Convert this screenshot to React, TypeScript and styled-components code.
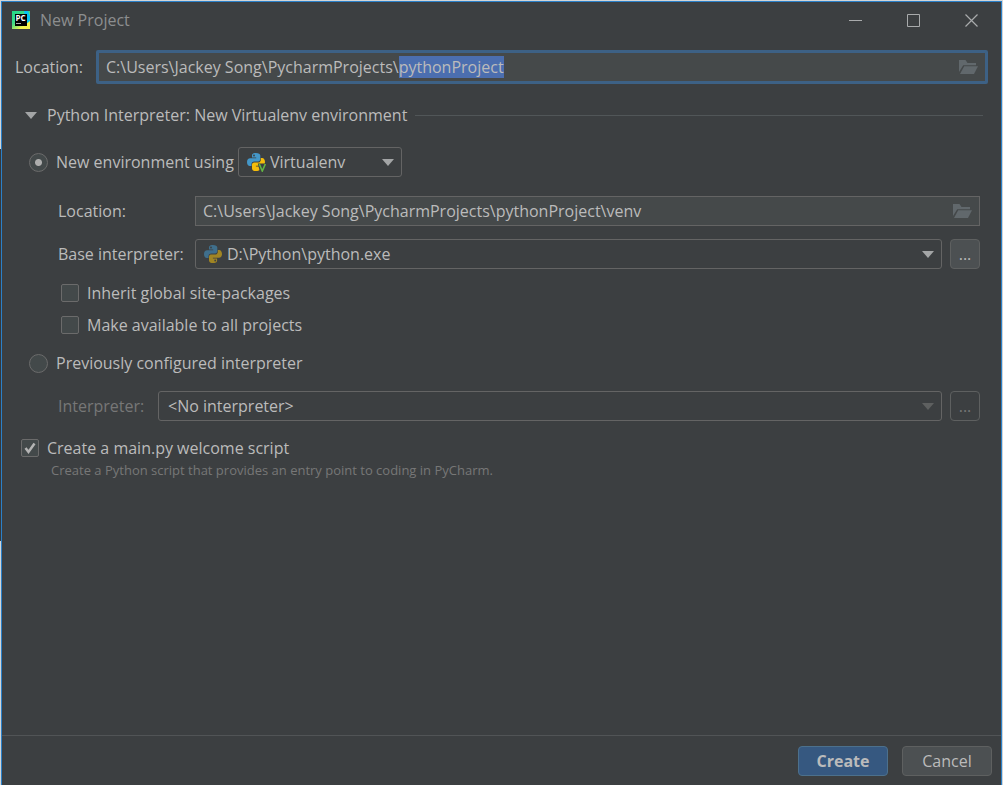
import React, { useEffect, useRef, useState } from "react";
import styled, { createGlobalStyle } from "styled-components";

const GlobalStyle = createGlobalStyle`
  *, *::before, *::after { box-sizing: border-box; }
  html, body, #root { height: 100%; }
  body {
    margin: 0;
    background: #d9dadb;
    color: #bbbbbb;
    font-family: "Open Sans", "Noto Sans", sans-serif;
    font-size: 16px;
    line-height: 22px;
  }
  input, select, button { font: inherit; color: inherit; margin: 0; }
`;

const Desktop = styled.div`
  min-height: 100%;
  display: flex;
  padding: 1px 1px 0;
  background: linear-gradient(#35383b, #35383b) 0 149px / 1px 392px no-repeat #d2d5d7;
`;

const Dialog = styled.section`
  flex: 1;
  min-width: 0;
  display: flex;
  flex-direction: column;
  background: #3c3f41;
  border: 1px solid #2b80c8;
  border-bottom: 0;
`;

const TitleBar = styled.header`
  display: flex;
  align-items: center;
  height: 36px;
  padding-left: 10px;
`;

const Title = styled.h1`
  flex: 1;
  margin: 0 0 0 10px;
  font-size: 16px;
  font-weight: 400;
  color: #8c8e8f;
`;

const WindowButton = styled.button`
  display: grid;
  place-items: center;
  width: 58px;
  height: 36px;
  padding: 0 2px 0 0;
  border: 0;
  background: none;
  color: #a9abac;
`;

const Body = styled.main`
  flex: 1;
  display: flex;
  flex-direction: column;
  padding: 12px 13px 0;
`;

const Row = styled.div<{ $indent?: number; $top?: number; $gap?: number }>`
  display: flex;
  align-items: center;
  gap: ${(p) => p.$gap ?? 8}px;
  margin-top: ${(p) => p.$top ?? 0}px;
  padding-left: ${(p) => p.$indent ?? 0}px;
`;

const Section = styled.div`
  padding: 0 8px 0 7px;
`;

const FieldLabel = styled.label<{ $width?: number; $dim?: boolean }>`
  flex: none;
  width: ${(p) => (p.$width ? `${p.$width}px` : "auto")};
  white-space: nowrap;
  color: ${(p) => (p.$dim ? "#777777" : "inherit")};
`;

const Field = styled.div<{ $focus?: boolean }>`
  flex: 1;
  display: flex;
  align-items: center;
  height: ${(p) => (p.$focus ? 34 : 30)}px;
  padding-right: 7px;
  background: #45494a;
  border: ${(p) => (p.$focus ? "3px solid #3d6185" : "1px solid #646464")};
  border-radius: ${(p) => (p.$focus ? 2 : 0)}px;
`;

const TextInput = styled.input`
  flex: 1;
  min-width: 0;
  padding: 0 7px;
  border: 0;
  outline: 0;
  background: none;
  caret-color: transparent;
  &::selection { background: #4b6eaf; color: #bbbbbb; }
`;

const IconButton = styled.button`
  display: flex;
  padding: 0;
  border: 0;
  background: none;
  color: #61686c;
`;

const SectionToggle = styled.button`
  display: flex;
  align-items: center;
  gap: 10px;
  padding: 0;
  border: 0;
  background: none;
`;

const Rule = styled.hr`
  flex: 1;
  height: 1px;
  margin: 0 5px 0 0;
  border: 0;
  background: #515658;
`;

const SelectGroup = styled.div`
  flex: 1;
  display: flex;
  gap: 8px;
`;

const SelectBox = styled.div<{ $width?: number }>`
  position: relative;
  flex: ${(p) => (p.$width ? "none" : "1")};
  width: ${(p) => (p.$width ? `${p.$width}px` : "auto")};
  height: 30px;
`;

const Select = styled.select<{ $icon?: boolean }>`
  appearance: none;
  width: 100%;
  height: 100%;
  padding: 0 32px 0 ${(p) => (p.$icon ? 31 : 9)}px;
  background: #3c3f41;
  border: 1px solid #646464;
  border-radius: 3px;
  &:disabled { opacity: 1; color: #bbbbbb; }
`;

const SelectIcon = styled.span`
  position: absolute;
  left: 9px;
  top: 6px;
  display: flex;
  pointer-events: none;
`;

const SelectArrow = styled.span`
  position: absolute;
  right: 8px;
  top: 12px;
  display: flex;
  pointer-events: none;
`;

const MoreButton = styled.button`
  width: 30px;
  height: 30px;
  padding: 0;
  background: #4c5052;
  border: 1px solid #5e6060;
  border-radius: 4px;
  &:disabled { background: none; color: #777777; }
`;

const Radio = styled.input`
  appearance: none;
  flex: none;
  width: 19px;
  height: 19px;
  border: 1px solid #6b6b6b;
  border-radius: 50%;
  background: #43494a;
  &:checked { background: radial-gradient(circle, #adadad 3px, #43494a 4px); }
`;

const CheckMark = styled.svg`
  position: absolute;
  inset: 0;
  pointer-events: none;
`;

const CheckHolder = styled.span`
  position: relative;
  flex: none;
  display: flex;
`;

const CheckInput = styled.input`
  appearance: none;
  width: 18px;
  height: 18px;
  border: 1px solid #6b6b6b;
  border-radius: 2px;
  background: #43494a;
`;

const Hint = styled.p`
  margin: 1px 0 0 36px;
  font-size: 13px;
  line-height: 20px;
  color: #777777;
`;

const Footer = styled.footer`
  display: flex;
  justify-content: flex-end;
  gap: 14px;
  padding: 10px 9px 9px;
  border-top: 1px solid #515456;
`;

const ActionButton = styled.button<{ $primary?: boolean }>`
  width: 90px;
  height: 30px;
  padding: 0;
  border: 1px solid ${(p) => (p.$primary ? "#4c708c" : "#5e6060")};
  border-radius: 4px;
  background: ${(p) => (p.$primary ? "#365880" : "#4c5052")};
  font-weight: ${(p) => (p.$primary ? 700 : 400)};
`;

const Arrow = ({ color = "#a3a5a6" }: { color?: string }) => (
  <svg width="12" height="7" viewBox="0 0 12 7" aria-hidden="true">
    <path d="M0 0h12L6 7z" fill={color} />
  </svg>
);

const Folder = () => (
  <svg width="19" height="15" viewBox="0 0 19 15" fill="currentColor" aria-hidden="true">
    <path d="M0 12V0h6.500l2 3H17v2.200H4.200z" />
    <path d="M5.200 6.300H19L15 14H1z" />
  </svg>
);

const PyCharmLogo = () => (
  <svg width="18" height="18" viewBox="0 0 18 18" aria-hidden="true">
    <defs>
      <linearGradient id="pcBase" x1="0" y1="0" x2="0.700" y2="1">
        <stop offset="0" stopColor="#21d789" />
        <stop offset="0.500" stopColor="#3ddb86" />
        <stop offset="0.900" stopColor="#fcf84a" />
      </linearGradient>
    </defs>
    <path d="M0 0h18v18H0z" fill="url(#pcBase)" />
    <path d="M12 0h4l2 5v5l-4 3z" fill="#07c3f2" />
    <path d="M18 11v7H6l9-4z" fill="#f3f34f" />
    <path d="M3 3h12v12H3z" fill="#000" />
    <path d="M4 12.500h5" stroke="#aaa" />
    <text x="3.500" y="9.500" fontSize="8" fontWeight="700" fill="#fff">PC</text>
  </svg>
);

const PythonLogo = ({ dim, venv }: { dim?: boolean; venv?: boolean }) => (
  <svg width="19" height="19" viewBox="0 0 19 19" aria-hidden="true">
    <path
      d="M8.900 0C5.400 0 5 1.500 5 2.600V4.500h4.200v.7H3.200C1.200 5.200 0 6.700 0 9.100s1.200 4 2.900 4h1.600v-2c0-1.500 1.200-2.600 2.700-2.600h3.900c1.300 0 2.200-1 2.200-2.200V2.600C13.300.9 11.700 0 8.900 0z"
      fill={dim ? "#3f6f8c" : "#4497c8"}
    />
    <path
      d="M9.200 18c3.400 0 3.900-1.500 3.900-2.600v-1.900H8.900v-.7h6c2 0 3.100-1.500 3.100-3.800s-1.100-4.100-2.900-4.100h-1.300v2c0 1.500-1.200 2.600-2.700 2.600H7.200C5.900 9.500 5 10.500 5 11.700v3.700c0 1.700 1.500 2.600 4.200 2.600z"
      fill={dim ? "#a08523" : "#f5bd0b"}
    />
    <circle cx="7" cy="2.500" r=".9" fill="#3c3f41" />
    {!venv && <circle cx="11.200" cy="15.500" r=".9" fill="#3c3f41" />}
    {venv && <path d="M10.800 10.500H19V19h-6z" fill="#3c3f41" />}
    {venv && <path d="M12.300 11l3 7 3-7" fill="none" stroke="#62b543" strokeWidth="1.600" />}
  </svg>
);

function CheckBox({ id, label, initial = false }: { id: string; label: string; initial?: boolean }) {
  const [checked, setChecked] = useState(initial);
  return (
    <>
      <CheckHolder>
        <CheckInput id={id} type="checkbox" checked={checked} onChange={(e) => setChecked(e.target.checked)} />
        {checked && (
          <CheckMark width="18" height="18" viewBox="0 0 18 18" fill="none" aria-hidden="true">
            <path d="M4.500 9l3 4L13.500 4.500" stroke="#b4b4b4" strokeWidth="2.500" />
          </CheckMark>
        )}
      </CheckHolder>
      <FieldLabel htmlFor={id}>{label}</FieldLabel>
    </>
  );
}

export default function App() {
  const locationRef = useRef<HTMLInputElement>(null);
  const [mode, setMode] = useState("new");

  useEffect(() => {
    const input = locationRef.current;
    if (!input) return;
    input.focus();
    input.setSelectionRange(input.value.lastIndexOf("\\") + 1, input.value.length);
  }, []);

  return (
    <Desktop>
      <GlobalStyle />
      <Dialog>
        <TitleBar>
          <PyCharmLogo />
          <Title>New Project</Title>
          <WindowButton aria-label="Minimize">
            <svg width="13" height="13" stroke="currentColor"><path d="M0 6.500h13" /></svg>
          </WindowButton>
          <WindowButton aria-label="Maximize">
            <svg width="13" height="13" stroke="currentColor" fill="none"><path d="M.5.5h12v12H.5z" /></svg>
          </WindowButton>
          <WindowButton aria-label="Close">
            <svg width="13" height="13" stroke="currentColor" strokeWidth="1.200"><path d="M.5.5l12 12M12.500.5l-12 12" /></svg>
          </WindowButton>
        </TitleBar>

        <Body>
          <Row $gap={0}>
            <FieldLabel htmlFor="location" $width={81}>Location:</FieldLabel>
            <Field $focus>
              <TextInput id="location" ref={locationRef} spellCheck={false} defaultValue={"C:\\Users\\Jackey Song\\PycharmProjects\\pythonProject"} />
              <IconButton aria-label="Browse location"><Folder /></IconButton>
            </Field>
          </Row>

          <Row $top={20} $indent={10}>
            <SectionToggle aria-expanded="true">
              <Arrow />
              Python Interpreter: New Virtualenv environment
            </SectionToggle>
            <Rule />
          </Row>

          <Section>
            <Row $top={21} $indent={7}>
              <Radio id="new-env" type="radio" name="mode" checked={mode === "new"} onChange={() => setMode("new")} />
              <FieldLabel htmlFor="new-env" $width={174}>New environment using</FieldLabel>
              <SelectBox $width={164}>
                <Select $icon aria-label="Environment type"><option>Virtualenv</option></Select>
                <SelectIcon><PythonLogo venv /></SelectIcon>
                <SelectArrow><Arrow /></SelectArrow>
              </SelectBox>
            </Row>

            <Row $top={19} $indent={36} $gap={0}>
              <FieldLabel htmlFor="venv-location" $width={137}>Location:</FieldLabel>
              <Field>
                <TextInput id="venv-location" spellCheck={false} defaultValue={"C:\\Users\\Jackey Song\\PycharmProjects\\pythonProject\\venv"} />
                <IconButton aria-label="Browse environment location"><Folder /></IconButton>
              </Field>
            </Row>

            <Row $top={13} $indent={36} $gap={0}>
              <FieldLabel htmlFor="base" $width={137}>Base interpreter:</FieldLabel>
              <SelectGroup>
                <SelectBox>
                  <Select id="base" $icon><option>D:\Python\python.exe</option></Select>
                  <SelectIcon><PythonLogo dim /></SelectIcon>
                  <SelectArrow><Arrow /></SelectArrow>
                </SelectBox>
                <MoreButton aria-label="Choose base interpreter">...</MoreButton>
              </SelectGroup>
            </Row>

            <Row $top={13} $indent={39}><CheckBox id="inherit" label="Inherit global site-packages" /></Row>
            <Row $top={10} $indent={39}><CheckBox id="available" label="Make available to all projects" /></Row>

            <Row $top={16} $indent={7}>
              <Radio id="existing" type="radio" name="mode" checked={mode === "existing"} onChange={() => setMode("existing")} />
              <FieldLabel htmlFor="existing">Previously configured interpreter</FieldLabel>
            </Row>

            <Row $top={17} $indent={36}>
              <FieldLabel htmlFor="interpreter" $width={92} $dim>Interpreter:</FieldLabel>
              <SelectBox>
                <Select id="interpreter" disabled><option>&lt;No interpreter&gt;</option></Select>
                <SelectArrow><Arrow color="#5e6060" /></SelectArrow>
              </SelectBox>
              <MoreButton disabled aria-label="Choose interpreter">...</MoreButton>
            </Row>
          </Section>

          <Row $top={16} $indent={6}><CheckBox id="welcome" label="Create a main.py welcome script" initial /></Row>
          <Hint>Create a Python script that provides an entry point to coding in PyCharm.</Hint>
        </Body>

        <Footer>
          <ActionButton $primary>Create</ActionButton>
          <ActionButton>Cancel</ActionButton>
        </Footer>
      </Dialog>
    </Desktop>
  );
}
